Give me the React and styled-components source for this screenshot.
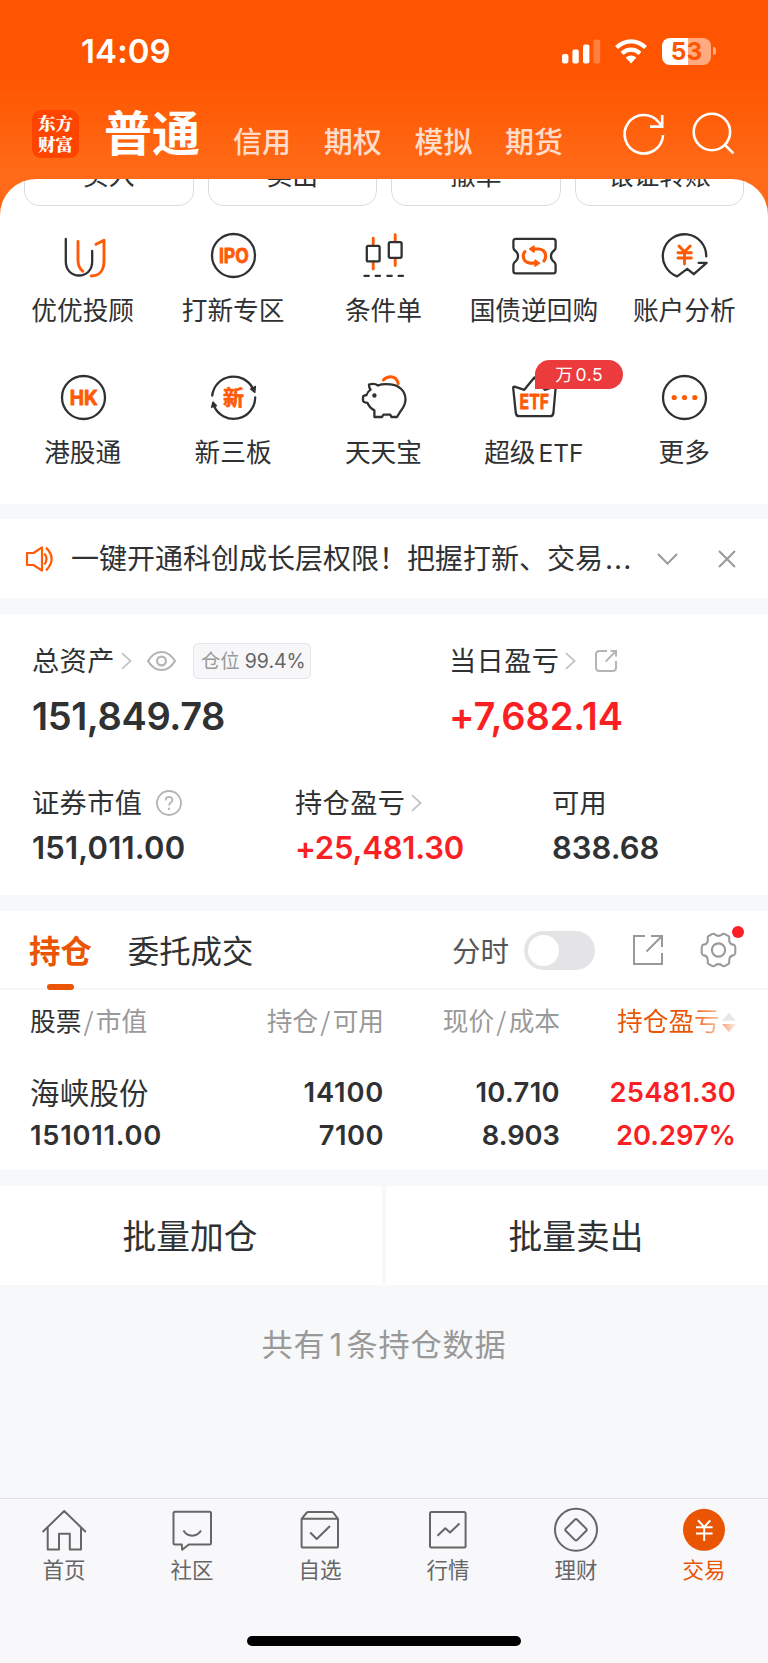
import React from 'react';
import styled, { createGlobalStyle } from 'styled-components';

const CJK = '"Noto Sans CJK SC", sans-serif';
const NUM = 'Inter, "Noto Sans CJK SC", sans-serif';
const INK = '#303133';
const ORANGE = '#ff5a05';
const BRAND = '#ea5504';
const RED = '#fa1f23';

const Global = createGlobalStyle`
  *, *::before, *::after { box-sizing: border-box; }
  body { margin: 0; background: #f7f8fa; }
  svg { display: block; overflow: visible; flex: none; }
`;

const Screen = styled.div`
  width: 768px;
  height: 1663px;
  display: flex;
  flex-direction: column;
  overflow: hidden;
  background: #f7f8fa;
  color: ${INK};
  font-family: ${CJK};
  font-weight: 400;
  white-space: nowrap;
`;

const Top = styled.div`
  flex: none;
  height: 504px;
  background: linear-gradient(#ff5500 0, #ff5500 75px, #ff6b18 175px, #ff6a18 190px, #ff5a08 225px);
`;
const StatusBar = styled.div`
  height: 103px;
  display: flex;
  align-items: flex-start;
  justify-content: space-between;
  padding: 31px 52px 0 81px;
  color: #fff;
`;
const Clock = styled.div`
  font: 600 33px/41px ${NUM};
  letter-spacing: 0.1px;
`;
const StatusIcons = styled.div`
  display: flex;
  align-items: center;
  height: 40px;
`;
const Battery = styled.div`
  width: 49px;
  height: 27px;
  margin-left: 15px;
  border-radius: 8px;
  background: linear-gradient(90deg, #fff 26px, rgba(255, 255, 255, 0.5) 26px);
  color: #ff5500;
  font: 700 24.5px/27px ${NUM};
  text-align: center;
`;
const BatteryTip = styled.div`
  width: 3px;
  height: 8px;
  margin-left: 2px;
  border-radius: 0 4px 4px 0;
  background: rgba(255, 255, 255, 0.5);
`;

const Nav = styled.div`
  height: 76px;
  display: flex;
  align-items: flex-start;
  padding: 0 34px 0 32px;
  color: #fff;
`;
const Logo = styled.div`
  width: 47px;
  height: 48px;
  margin-top: 7px;
  padding-top: 3px;
  border-radius: 9px;
  background: #ff4400;
  font: 900 17.6px/20.5px "Noto Serif CJK SC", ${CJK};
  text-align: center;
`;
const NavTitle = styled.div`
  margin: -3px 0 0 25px;
  font-size: 48px;
  line-height: 60px;
  font-weight: 700;
`;
const NavTabs = styled.div`
  display: flex;
  gap: 32.7px;
  margin: 18px 0 0 33px;
`;
const NavTab = styled.div`
  width: 58px;
  font-size: 29px;
  line-height: 38px;
  font-weight: 500;
  color: rgba(255, 255, 255, 0.8);
`;
const NavIcons = styled.div`
  display: flex;
  gap: 23px;
  margin: 8px 0 0 auto;
`;

const Sheet = styled.div`
  height: 325px;
  border-radius: 36px 36px 0 0;
  overflow: hidden;
  background: #fff;
`;
const OrderButtons = styled.div`
  height: 27px;
  display: flex;
  align-items: flex-end;
  gap: 14px;
  padding: 0 24px;
`;
const OrderButton = styled.div`
  flex: 1;
  height: 66px;
  border: 1.5px solid #dcdcde;
  border-radius: 15px;
  padding-top: 3px;
  font-size: 25.8px;
  line-height: 60px;
  text-align: center;
`;
const Grid = styled.div`
  display: grid;
  grid-template-columns: repeat(5, 150.4px);
  grid-auto-rows: 142px;
  padding: 27px 0 0 8px;
`;
const GridItem = styled.div`
  position: relative;
  display: flex;
  flex-direction: column;
  align-items: center;
`;
const GridLabel = styled.div`
  margin: 12.5px 1px 0 0;
  font-size: 25.7px;
  line-height: 36px;
`;
const Latin = styled.span`
  margin-left: 3px;
  font-family: Inter, sans-serif;
  font-size: 24.5px;
`;
const Promo = styled.div`
  position: absolute;
  left: 76px;
  top: -15px;
  width: 88px;
  height: 29px;
  border-radius: 15px 15px 15px 0;
  background: #eb3b3d;
  color: #fff;
  font: 400 17.5px/29px ${NUM};
  letter-spacing: 0.5px;
  word-spacing: -3px;
  text-align: center;
`;

const Notice = styled.div`
  flex: none;
  height: 79px;
  margin-top: 15px;
  display: flex;
  align-items: center;
  padding: 0 32px 0 26px;
  background: #fff;
`;
const NoticeText = styled.div`
  width: 586px;
  margin: -1px 0 0 17px;
  font-size: 28px;
  line-height: 40px;
`;
const Dots = styled.span`
  font-family: ${NUM};
  letter-spacing: 1px;
  margin-left: 2px;
`;

const Assets = styled.div`
  flex: none;
  height: 281px;
  margin-top: 16px;
  padding: 27px 32px 0;
  background: #fff;
`;
const AssetRow = styled.div`
  display: grid;
  grid-template-columns: ${p => p.$cols};
  height: ${p => p.$h}px;
`;
const Label = styled.div`
  display: flex;
  align-items: center;
  height: 40px;
  font-size: 27.2px;
  line-height: 40px;
  letter-spacing: 0.4px;
  & > span { margin-top: -4px; }
`;
const Amount = styled.div`
  margin-top: ${p => (p.$big ? 15 : 6)}px;
  font: 600 ${p => (p.$big ? 38 : 31)}px/${p => (p.$big ? 40 : 38)}px ${NUM};
  letter-spacing: ${p => p.$ls || 0}px;
  color: ${p => (p.$up ? RED : INK)};
`;
const Ratio = styled.div`
  display: flex;
  align-items: center;
  justify-content: flex-end;
  gap: 5px;
  width: 118px;
  height: 36px;
  margin-left: 17px;
  padding-right: 4px;
  border: 1.5px solid #e4e5e8;
  border-radius: 5px;
  background: #f7f7fa;
  font: 400 19.5px/32px ${NUM};
  letter-spacing: 0;
  color: #666;
`;
const RatioName = styled.span`
  font: 400 19.4px/30px ${CJK};
  color: #999;
  margin-top: -2px;
`;

const Tabs = styled.div`
  flex: none;
  height: 79px;
  margin-top: 16px;
  display: flex;
  align-items: center;
  padding: 1px 31px 0 29px;
  border-bottom: 2px solid #f6f6f8;
  background: #fff;
`;
const Tab = styled.div`
  position: relative;
  height: 77px;
  margin-right: 36px;
  font-size: 31.4px;
  line-height: 75px;
  font-weight: ${p => (p.$on ? 700 : 400)};
  color: ${p => (p.$on ? BRAND : INK)};
  &::after {
    content: '';
    display: ${p => (p.$on ? 'block' : 'none')};
    position: absolute;
    left: 18px;
    bottom: -1px;
    width: 27px;
    height: 6px;
    border-radius: 3px;
    background: ${BRAND};
  }
`;
const SwitchLabel = styled.div`
  margin-left: auto;
  font-size: 28.5px;
  line-height: 72px;
  color: #555;
`;
const Switch = styled.div`
  width: 71px;
  height: 39px;
  margin: 0 38px 0 15px;
  padding: 4px;
  border-radius: 20px;
  background: #e4e4e6;
  &::before {
    content: '';
    display: block;
    width: 31px;
    height: 31px;
    border-radius: 50%;
    background: #fff;
  }
`;
const GearWrap = styled.div`
  position: relative;
  margin-left: 37px;
  &::after {
    content: '';
    position: absolute;
    right: -7px;
    top: -6px;
    width: 12px;
    height: 12px;
    border-radius: 50%;
    background: ${RED};
  }
`;

const Table = styled.div`
  flex: none;
  height: 180px;
  padding: 0 32px 0 30px;
  background: #fff;
`;
const Row = styled.div`
  display: grid;
  grid-template-columns: 177px 177px 176px 176px;
  height: ${p => p.$h}px;
  align-items: start;
`;
const Head = styled.div`
  display: flex;
  justify-content: ${p => (p.$left ? 'flex-start' : 'flex-end')};
  gap: 2.2px;
  padding-top: 11px;
  font-size: 25.7px;
  line-height: 38px;
  color: ${p => (p.$on ? BRAND : '#999')};
  b { font-weight: 400; color: ${INK}; }
`;
const Fade = styled.span`
  background: linear-gradient(90deg, ${BRAND} 72%, #f9c8ac 100%);
  background-clip: text;
  -webkit-background-clip: text;
  color: transparent;
`;
const SortIcon = styled.svg`
  margin-top: 11px;
`;
const Stock = styled.div`
  font-size: 29.4px;
  line-height: 40px;
  letter-spacing: 0.3px;
`;
const Cell = styled.div`
  font: 600 27.3px/${p => p.$lh || 43}px ${NUM};
  letter-spacing: ${p => p.$ls || 0}px;
  text-align: ${p => (p.$left ? 'left' : 'right')};
  color: ${p => (p.$up ? RED : INK)};
`;

const Batch = styled.div`
  flex: none;
  display: grid;
  grid-template-columns: 1fr 1fr;
  gap: 4px;
  height: 99px;
  margin-top: 16px;
`;
const BatchButton = styled.div`
  padding-right: 2px;
  background: #fff;
  font-size: 33.7px;
  line-height: 97px;
  text-align: center;
`;
const Count = styled.div`
  flex: 1;
  padding-top: 38px;
  font-size: 31.2px;
  line-height: 40px;
  letter-spacing: 0.8px;
  text-align: center;
  color: #999;
`;
const Digit = styled.span`
  font-family: ${NUM};
  margin: 0 3.5px 0 4px;
`;

const BottomBar = styled.div`
  flex: none;
  height: 165px;
  display: grid;
  grid-template-columns: repeat(6, 1fr);
  grid-template-rows: 137px 1fr;
  padding-top: 9px;
  border-top: 1.5px solid #dfdfe2;
  background: #f8f8fb;
`;
const BarItem = styled.div`
  display: flex;
  flex-direction: column;
  align-items: center;
  font-size: 21.5px;
  line-height: 30px;
  color: ${p => (p.$on ? BRAND : '#666')};
  svg { margin-bottom: 2px; }
`;
const HomeIndicator = styled.div`
  grid-column: 1 / -1;
  justify-self: center;
  width: 274px;
  height: 10px;
  margin-top: -9px;
  border-radius: 5px;
  background: #000;
`;

const FeatureSvg = ({ children }) => (
  <svg width="45" height="45" viewBox="0 0 45 45" fill="none" stroke="#303133" strokeWidth="2.3" strokeLinecap="round" strokeLinejoin="round">
    {children}
  </svg>
);
const Mark = ({ y, x, w, size = 19.5, children }) => (
  <text x={x} y={y} textLength={w} lengthAdjust="spacingAndGlyphs" fill={ORANGE} stroke={ORANGE} strokeWidth="0.8" fontFamily={NUM} fontWeight="700" fontSize={size}>
    {children}
  </text>
);

const features = [
  ['优优投顾', <>
    <path d="M4.8 6V28.5C4.8 37 10.5 42.5 18 42.5S31.2 37 31.2 28.5V18" />
    <path d="M17 8.5V27Q17 35 21.8 38.2M35 11.3L43 7.2V28C43 37 38.5 43 30.2 43" stroke={ORANGE} strokeWidth="2.9" />
  </>],
  ['打新专区', <>
    <circle cx="22.5" cy="22.5" r="21.5" />
    <Mark x="7.9" y="29.6" w="29.8">IPO</Mark>
  </>],
  ['条件单', <>
    <path d="M12.2 5.2V12M12.2 29V36M34.2 1.8V8M34.2 26V32.5" stroke={ORANGE} strokeWidth="2.9" />
    <rect x="5.8" y="12.8" width="12.8" height="15.6" rx="1.5" />
    <rect x="27.8" y="9.2" width="12.8" height="15.6" rx="1.5" />
    <path d="M3.4 42.8h4.4M14.6 42.8h4.4M26.4 42.8h4.4M37.6 42.8h4.4" />
  </>],
  ['国债逆回购', <>
    <path d="M3.8 5.8H41.2Q43.6 5.8 43.6 8.2V14.5Q43.6 16.5 41.8 17.8Q39 19.8 39 23.2T41.8 28.6Q43.6 30 43.6 32V38Q43.6 40.4 41.2 40.4H3.8Q1.4 40.4 1.4 38V32Q1.4 30 3.2 28.6Q6 26.6 6 23.2T3.2 17.8Q1.4 16.5 1.4 14.5V8.2Q1.4 5.8 3.8 5.8Z" />
    <g stroke={ORANGE} strokeWidth="3.2"><path d="M21 16H27Q33.6 16.8 33.6 23.5Q33.6 26 32 28M12.8 18.8Q11.2 20.6 11.2 23Q11.6 29.4 18 30.2H24" /><path d="M22 13.2L17.8 16L22 19ZM23 27.2L27.4 30.2L23 33Z" fill={ORANGE} strokeWidth="1.6" /></g>
  </>],
  ['账户分析', <>
    <path d="M44.2 23.4A21.7 21.7 0 1 0 15.2 43.4L25.2 35.8L31.8 41.2L44.6 29.8H36.6" />
    <path d="M17 13L22.5 18.8L28.2 13M22.5 19V31M16 19.8H29.4M16 25H29.4" stroke={ORANGE} strokeWidth="2.9" />
  </>],
  ['港股通', <>
    <circle cx="22.5" cy="22.5" r="21.5" />
    <Mark x="8.8" y="29.8" w="28">HK</Mark>
  </>],
  ['新三板', <>
    <path d="M1.2 20.5A21.5 21.5 0 0 1 41.8 13.5M44.2 22.5A21.5 21.5 0 0 1 3 31" />
    <path d="M39.6 14L44.4 11.4L43.8 17.4ZM5.4 30.8L0.6 32.2L2 27Z" fill="#303133" strokeWidth="1.4" />
    <text x="12" y="30" fill={ORANGE} stroke={ORANGE} strokeWidth="0.6" fontFamily={CJK} fontWeight="700" fontSize="21">新</text>
  </>],
  ['天天宝', <>
    <path d="M8 9.5Q13.5 8 17 10.5C21 8.6 25.5 9 29.5 9.3C38 10 44.5 16 44.5 24.5C44.5 30 42 33 39.6 36.2L36 42H30.4L29.2 39.6H22.5L21 42H13.4V35.4Q8.6 33 6.4 27.8Q2 27.2 2 25.5V22Q2 20.6 5.6 20Q6.6 16.6 9.6 14.6Q7.8 12.5 8 9.5Z" />
    <circle cx="13.4" cy="20.5" r="2.2" fill="#303133" stroke="none" />
    <path d="M22.4 5Q25.5 1.7 30 1.8Q36 2.4 37.2 8.6" stroke={ORANGE} strokeWidth="3" />
  </>],
  [<>超级<Latin>ETF</Latin></>, <>
    <path d="M2.6 11.6L12.3 14.8L22.3 2.5L32.8 14.8L42.2 11.6Q43.8 11.4 43.6 13L41.4 38Q41 41.2 38 41.2H7.4Q4.2 41.2 3.8 38L1.2 13Q1 11.4 2.6 11.6Z" />
    <Mark x="7.6" y="33.9" w="29.4">ETF</Mark>
  </>, '万 0.5'],
  ['更多', <>
    <circle cx="22.5" cy="22.5" r="21.5" />
    <g fill={ORANGE} stroke="none"><circle cx="12.2" cy="22.5" r="2.6" /><circle cx="22.5" cy="22.5" r="2.6" /><circle cx="32.8" cy="22.5" r="2.6" /></g>
  </>],
];

const barItems = [
  ['首页', <path d="M.6 24L22.2 3L43.8 24M5.7 19.5V41.5H17V25.8H27.8V41.5H39V19.5" />],
  ['社区', <><path d="M5 3.8H39.5Q41 3.8 41 5.3V35Q41 36.5 39.5 36.5H18.8L12.2 41.8L11.8 36.5H5Q3.5 36.5 3.5 35V5.3Q3.5 3.8 5 3.8Z" /><path d="M13.4 22.6Q16.5 27.7 22.2 27.7T31 22.6" /></>],
  ['自选', <><path d="M3.6 10.8L8.4 5Q9.2 4 10.5 4H33.5Q34.8 4 35.6 5L40 10.8V38Q40 39.6 38.4 39.6H5.2Q3.6 39.6 3.6 38V10.8H40" /><path d="M12.2 24.5L18.7 31L32 18" /></>],
  ['行情', <><rect x="4" y="4" width="35.6" height="35.6" rx="1.5" /><path d="M11.5 27.8L19.3 20.3L24 24.5L33.5 15.5" /></>],
  ['理财', <><circle cx="22" cy="21.8" r="21" /><path d="M21 11.5Q22 10.6 23 11.5L32.3 20.8Q33.2 21.8 32.3 22.8L23 32.1Q22 33 21 32.1L11.7 22.8Q10.8 21.8 11.7 20.8Z" /></>],
  ['交易', <><circle cx="22" cy="21.8" r="21" fill={BRAND} stroke="none" /><path d="M16 12.3L22.2 19L28.3 12.3M22.2 19V33M14 19.2H30.6M14 25.4H30.6" stroke="#fff" /></>],
];

const Chevron = () => (
  <svg width="11" height="18" viewBox="0 0 11 18" fill="none" stroke="#c4c4c6" strokeWidth="1.8" style={{ marginLeft: 6 }}>
    <path d="M1 1.2L9.6 9L1 16.8" />
  </svg>
);

export default function App() {
  return (
    <>
      <Global />
      <Screen>
        <Top>
          <StatusBar>
            <Clock>14:09</Clock>
            <StatusIcons>
              <svg width="39" height="25" viewBox="0 0 39 25" fill="#fff">
                <rect x="0" y="15" width="6.4" height="9.4" rx="2" />
                <rect x="10.4" y="10.4" width="6.4" height="14" rx="2" />
                <rect x="21" y="5.4" width="6.4" height="19" rx="2" />
                <rect x="31.4" y="0.4" width="6.8" height="24" rx="2" opacity="0.25" />
              </svg>
              <svg width="32" height="25" viewBox="0 0 32 25" fill="none" stroke="#fff" strokeWidth="4.2" style={{ marginLeft: 14 }}>
                <path d="M1.5 8.6Q7.8 2.4 16 2.4T30.5 8.6" />
                <path d="M7 14.4Q11 10.7 16 10.7T25 14.4" />
                <path d="M10.6 18.6Q16 14.2 21.4 18.6L16 24.4Z" fill="#fff" stroke="none" />
              </svg>
              <Battery>53</Battery>
              <BatteryTip />
            </StatusIcons>
          </StatusBar>
          <Nav>
            <Logo>东方<br />财富</Logo>
            <NavTitle>普通</NavTitle>
            <NavTabs>
              {['信用', '期权', '模拟', '期货'].map(t => <NavTab key={t}>{t}</NavTab>)}
            </NavTabs>
            <NavIcons>
              <svg width="44" height="46" viewBox="0 0 44 46" fill="none" stroke="#fff" strokeWidth="2.6">
                <path d="M40 24A19.2 19.2 0 1 1 36 11.5L39 15.2M39.2 4V15.6H27" />
              </svg>
              <svg width="44" height="46" viewBox="0 0 44 46" fill="none" stroke="#fff" strokeWidth="2.6">
                <circle cx="21.9" cy="21" r="18.2" />
                <path d="M34 33L43.4 42.4" />
              </svg>
            </NavIcons>
          </Nav>
          <Sheet>
            <OrderButtons>
              {['买入', '卖出', '撤单', '银证转账'].map(t => <OrderButton key={t}>{t}</OrderButton>)}
            </OrderButtons>
            <Grid>
              {features.map(([name, icon, promo], i) => (
                <GridItem key={i}>
                  <FeatureSvg>{icon}</FeatureSvg>
                  <GridLabel>{name}</GridLabel>
                  {promo && <Promo>{promo}</Promo>}
                </GridItem>
              ))}
            </Grid>
          </Sheet>
        </Top>

        <Notice>
          <svg width="28" height="26" viewBox="0 0 28 26" fill="none" stroke={ORANGE} strokeWidth="2.2">
            <path d="M1 7H7.5L16 1.4V24.6L7.5 19H1Z" strokeLinejoin="round" />
            <path d="M18.4 7.5Q22.6 13 18.4 18.5M20 1.6Q31.4 13 20 24.4" />
          </svg>
          <NoticeText>一键开通科创成长层权限！把握打新、交易<Dots>...</Dots></NoticeText>
          <svg width="21" height="12" viewBox="0 0 21 12" fill="none" stroke="#999" strokeWidth="2">
            <path d="M1 1L10.5 10.6L20 1" />
          </svg>
          <svg width="18" height="18" viewBox="0 0 18 18" fill="none" stroke="#999" strokeWidth="2" style={{ marginLeft: 40 }}>
            <path d="M1 1L17 17M17 1L1 17" />
          </svg>
        </Notice>

        <Assets>
          <AssetRow $cols="417px 1fr" $h={142}>
            <div>
              <Label>
                <span>总资产</span>
                <Chevron />
                <svg width="29" height="20" viewBox="0 0 29 20" fill="none" stroke="#b4b4b6" strokeWidth="2.2" style={{ marginLeft: 15 }}>
                  <path d="M1 10Q6.5 1 14.5 1T28 10Q22.5 19 14.5 19T1 10Z" />
                  <circle cx="14.5" cy="10" r="4.4" />
                </svg>
                <Ratio><RatioName>仓位</RatioName>99.4%</Ratio>
              </Label>
              <Amount $big $ls={-0.4}>151,849.78</Amount>
            </div>
            <div>
              <Label>
                <span>当日盈亏</span>
                <Chevron />
                <svg width="22" height="22" viewBox="0 0 22 22" fill="none" stroke="#b4b4b6" strokeWidth="2" style={{ marginLeft: 19 }}>
                  <path d="M12 1H4.5Q1 1 1 4.5V17.5Q1 21 4.5 21H17.5Q21 21 21 17.5V11M15.5 1H21V6.5M21 1L10.6 11.6" />
                </svg>
              </Label>
              <Amount $big $up $ls={-0.15}>+7,682.14</Amount>
            </div>
          </AssetRow>
          <AssetRow $cols="263px 257px 1fr" $h={90}>
            <div>
              <Label>
                <span>证券市值</span>
                <svg width="26" height="26" viewBox="0 0 26 26" fill="none" stroke="#b4b4b6" strokeWidth="1.8" style={{ marginLeft: 14 }}>
                  <circle cx="13" cy="13" r="12" />
                  <path d="M9.6 10.4C9.6 5.6 16.6 5.8 16.4 10.2C16.3 12.6 13 12.6 13 15.6M13 17.8V20" />
                </svg>
              </Label>
              <Amount $ls={0.2}>151,011.00</Amount>
            </div>
            <div>
              <Label><span>持仓盈亏</span><Chevron /></Label>
              <Amount $up $ls={-0.2}>+25,481.30</Amount>
            </div>
            <div>
              <Label><span>可用</span></Label>
              <Amount>838.68</Amount>
            </div>
          </AssetRow>
        </Assets>

        <Tabs>
          <Tab $on>持仓</Tab>
          <Tab>委托成交</Tab>
          <SwitchLabel>分时</SwitchLabel>
          <Switch />
          <svg width="30" height="30" viewBox="0 0 30 30" fill="none" stroke="#999" strokeWidth="2">
            <path d="M12 1H1V29H29V18M18 1H29V12M29 1L13.5 16.5" />
          </svg>
          <GearWrap>
            <svg width="37" height="36" viewBox="0 0 37 36" fill="none" stroke="#999" strokeWidth="2.1" strokeLinejoin="round">
              <path transform="translate(18.5 18) scale(.96) translate(-18.5 -18)" d="M12.2 1.2Q14.2.6 15 2Q18.5 4.6 22 2Q22.8.6 24.8 1.2L29 3.6Q30.4 4.6 29.6 6.2Q29.4 12 34 12.4Q35.6 12.6 36 15V21Q35.6 23.4 34 23.6Q29.4 24 29.6 29.8Q30.4 31.4 29 32.4L24.8 34.8Q22.8 35.4 22 34Q18.5 31.4 15 34Q14.2 35.4 12.2 34.8L8 32.4Q6.6 31.4 7.4 29.8Q7.6 24 3 23.6Q1.4 23.4 1 21V15Q1.4 12.6 3 12.4Q7.6 12 7.4 6.2Q6.6 4.6 8 3.6Z" />
              <circle cx="18.5" cy="18" r="6.6" />
            </svg>
          </GearWrap>
        </Tabs>

        <Table>
          <Row $h={81}>
            <Head $left><b>股票</b><span>/</span><span>市值</span></Head>
            <Head><span>持仓</span><span>/</span><span>可用</span></Head>
            <Head><span>现价</span><span>/</span><span>成本</span></Head>
            <Head $on>
              <Fade>持仓盈亏</Fade>
              <SortIcon width="14" height="22" viewBox="0 0 15 22">
                <defs>
                  <linearGradient id="down" x1="0" x2="1"><stop stopColor="#f7a67c" /><stop offset="1" stopColor="#fdeee6" /></linearGradient>
                </defs>
                <path d="M0 8.6L7.5 0L15 8.6Z" fill="#e6e7e9" />
                <path d="M0 12L7.5 21L15 12Z" fill="url(#down)" />
              </SortIcon>
            </Head>
          </Row>
          <Row $h={42}>
            <Stock>海峡股份</Stock>
            <Cell $ls={0.8}>14100</Cell>
            <Cell $ls={0.4}>10.710</Cell>
            <Cell $up $ls={0.2}>25481.30</Cell>
          </Row>
          <Row $h={44}>
            <Cell $left $lh={46} $ls={0.75}>151011.00</Cell>
            <Cell $lh={46} $ls={0.5}>7100</Cell>
            <Cell $lh={46}>8.903</Cell>
            <Cell $up $lh={46}>20.297%</Cell>
          </Row>
        </Table>

        <Batch>
          <BatchButton>批量加仓</BatchButton>
          <BatchButton>批量卖出</BatchButton>
        </Batch>
        <Count>共有<Digit>1</Digit>条持仓数据</Count>

        <BottomBar>
          {barItems.map(([name, icon], i) => (
            <BarItem key={name} $on={i === 5}>
              <svg width="44" height="44" viewBox="0 0 44 44" fill="none" stroke="#666" strokeWidth="2" strokeLinejoin="round">{icon}</svg>
              {name}
            </BarItem>
          ))}
          <HomeIndicator />
        </BottomBar>
      </Screen>
    </>
  );
}
